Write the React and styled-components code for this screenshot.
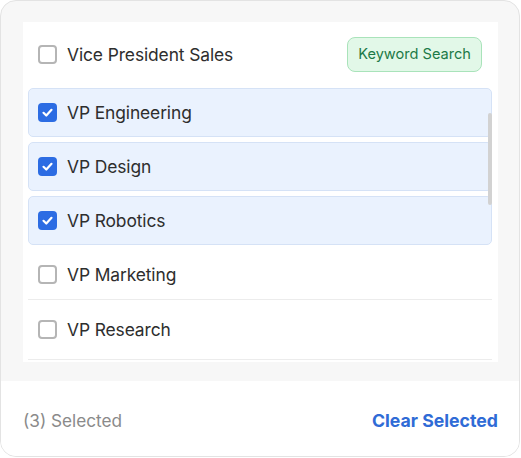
import React from "react";
import styled, { createGlobalStyle } from "styled-components";

const Global = createGlobalStyle`
  html, body { margin: 0; padding: 0; background: #ffffff; }
  body { font-family: Inter, "Noto Sans", Arial, sans-serif; }
  * { box-sizing: border-box; }
`;

const Card = styled.div`
  width: 520px;
  height: 457px;
  border: 1px solid #e3e3e3;
  border-radius: 16px;
  overflow: hidden;
  display: flex;
  flex-direction: column;
  background: #f7f7f7;
`;

const Body = styled.div`
  padding: 21px 21px 19px 22px;
`;

const Panel = styled.div`
  position: relative;
  height: 340px;
  background: #ffffff;
  overflow: hidden;
`;

const List = styled.div`
  display: flex;
  flex-direction: column;
  padding: 0 6px 0 5px;
`;

const Row = styled.label`
  display: flex;
  align-items: center;
  gap: 10px;
  height: ${(p) => p.$h}px;
  flex-shrink: 0;
  padding: 0 10px 0 ${(p) => (p.$selected ? 9 : 10)}px;
  margin-bottom: ${(p) => p.$mb || 0}px;
  border-radius: ${(p) => (p.$selected ? "5px" : "0")};
  background: ${(p) => (p.$selected ? "#eaf2fe" : "transparent")};
  border: ${(p) => (p.$selected ? "1px solid #d5e2f6" : "none")};
  border-bottom: ${(p) =>
    p.$selected ? "1px solid #d5e2f6" : p.$divider ? "1px solid #ececec" : "none"};
`;

const Box = styled.span`
  width: 19px;
  height: 19px;
  border-radius: 4px;
  flex-shrink: 0;
  display: flex;
  align-items: center;
  justify-content: center;
  border: ${(p) => (p.$checked ? "none" : "2px solid #b5b5b5")};
  background: ${(p) => (p.$checked ? "#2c6ce3" : "#ffffff")};
`;

const Label = styled.span`
  font-size: 17.4px;
  color: #2e2e2e;
  letter-spacing: -0.1px;
  flex: 1;
`;

const Badge = styled.span`
  height: 35px;
  padding: 0 10px;
  display: flex;
  align-items: center;
  border-radius: 8px;
  background: #e2f8e8;
  border: 1px solid #a9e3ba;
  color: #1d7a47;
  font-size: 14.6px;
`;

const Thumb = styled.div`
  position: absolute;
  left: 465px;
  top: 91px;
  width: 4px;
  height: 92px;
  border-radius: 2px;
  background: #d2d2d2;
`;

const Footer = styled.div`
  flex: 1;
  background: #ffffff;
  display: flex;
  align-items: center;
  justify-content: space-between;
  padding: 3px 21px 0 22px;
`;

const Count = styled.span`
  font-size: 17.2px;
  color: #8a8a8a;
`;

const Clear = styled.button`
  border: none;
  background: none;
  padding: 0;
  font-family: inherit;
  font-size: 17.7px;
  font-weight: 700;
  color: #2f6bd6;
  cursor: pointer;
`;

const Check = () => (
  <svg width="13" height="13" viewBox="0 0 13 13" fill="none">
    <polyline
      points="2.5,6.8 5.3,9.5 10.5,3.8"
      stroke="#ffffff"
      strokeWidth="2.2"
      strokeLinecap="round"
      strokeLinejoin="round"
    />
  </svg>
);

const items = [
  { label: "Vice President Sales", checked: false, h: 64, mb: 2, badge: true },
  { label: "VP Engineering", checked: true, h: 49, mb: 5 },
  { label: "VP Design", checked: true, h: 49, mb: 5 },
  { label: "VP Robotics", checked: true, h: 49, mb: 5 },
  { label: "VP Marketing", checked: false, h: 50, divider: true },
  { label: "VP Research", checked: false, h: 60, divider: true },
];

export default function App() {
  const count = items.filter((i) => i.checked).length;
  return (
    <>
      <Global />
      <Card>
        <Body>
          <Panel>
            <List>
              {items.map((it) => (
                <Row
                  key={it.label}
                  $selected={it.checked}
                  $h={it.h}
                  $mb={it.mb}
                  $divider={it.divider}
                >
                  <Box $checked={it.checked}>{it.checked && <Check />}</Box>
                  <Label>{it.label}</Label>
                  {it.badge && <Badge>Keyword Search</Badge>}
                </Row>
              ))}
            </List>
            <Thumb />
          </Panel>
        </Body>
        <Footer>
          <Count>({count}) Selected</Count>
          <Clear>Clear Selected</Clear>
        </Footer>
      </Card>
    </>
  );
}
